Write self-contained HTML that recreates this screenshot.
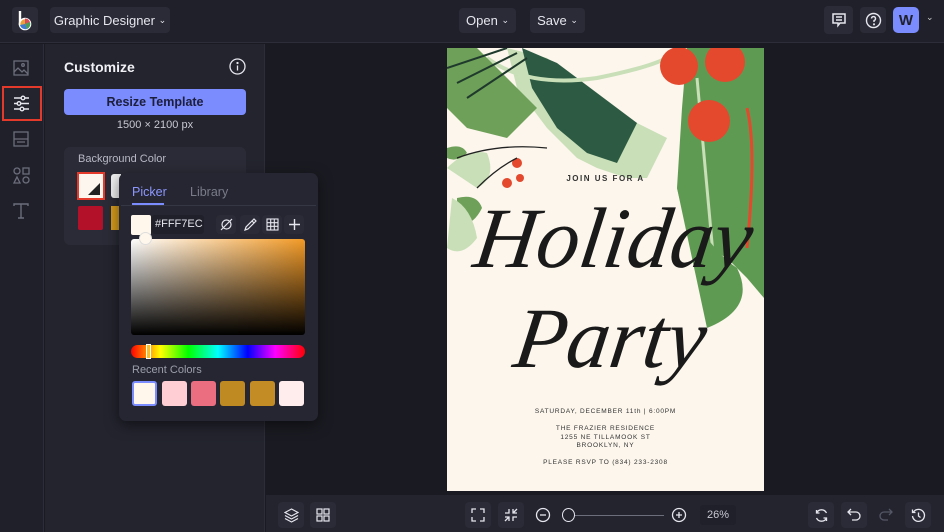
<!DOCTYPE html>
<html><head><meta charset="utf-8"><style>
*{box-sizing:border-box;margin:0;padding:0}
body{width:944px;height:532px;overflow:hidden;background:#1a1b22;font-family:"Liberation Sans",sans-serif;color:#e6e6ee;position:relative}
.abs{position:absolute}
.btn{position:absolute;background:#2a2b36;border-radius:4px;color:#e6e6ee;font-size:13px;display:flex;align-items:center;justify-content:center}
.ib{position:absolute;background:#2a2b36;border-radius:4px;display:flex;align-items:center;justify-content:center}
svg{display:block}
</style></head><body>
<div class="abs" style="left:0;top:0;width:944px;height:43px;background:#1f2029;border-bottom:1px solid #2c2d38"></div>
<div class="ib" style="left:12px;top:7px;width:26px;height:26px;background:#2a2b36">
<svg width="20" height="22" viewBox="0 0 20 22"><path d="M5 2v14" stroke="#fff" stroke-width="2.4"/><circle cx="10" cy="15" r="5.5" fill="#e8a23a"/><circle cx="10" cy="15" r="5.5" fill="none" stroke="#fff" stroke-width="1.6"/><path d="M10 15L10 9.5A5.5 5.5 0 0 1 15 13z" fill="#d94a5b"/><path d="M10 15L15 13A5.5 5.5 0 0 1 12 20z" fill="#4a9c5a"/><path d="M10 15L12 20A5.5 5.5 0 0 1 5 16z" fill="#3f7ad1"/></svg></div>
<div class="btn" style="left:50px;top:7px;width:120px;height:26px">Graphic Designer&nbsp;<span style="font-size:9px">&#8964;</span></div>
<div class="btn" style="left:459px;top:8px;width:57px;height:25px">Open&nbsp;<span style="font-size:9px">&#8964;</span></div>
<div class="btn" style="left:530px;top:8px;width:55px;height:25px">Save&nbsp;<span style="font-size:9px">&#8964;</span></div>
<div class="ib" style="left:824px;top:6px;width:29px;height:28px"><svg width="16" height="16" viewBox="0 0 16 16" fill="none" stroke="#e6e6ee" stroke-width="1.5"><path d="M2 2h12v9H9l-2 2.5V11H2z"/><path d="M5 5h6M5 8h6"/></svg></div>
<div class="ib" style="left:860px;top:7px;width:26px;height:26px"><svg width="17" height="17" viewBox="0 0 17 17" fill="none" stroke="#e6e6ee" stroke-width="1.4"><circle cx="8.5" cy="8.5" r="7"/><path d="M6.5 6.5a2 2 0 1 1 2.5 2v1.5"/><circle cx="9" cy="12.3" r=".4" fill="#e6e6ee"/></svg></div>
<div class="abs" style="left:893px;top:7px;width:26px;height:26px;background:#7b8cff;border-radius:5px;color:#1f2029;font-weight:bold;font-size:15px;display:flex;align-items:center;justify-content:center">W</div>
<div class="abs" style="left:926px;top:12px;font-size:9px;color:#ccc">&#8964;</div>

<div class="abs" style="left:0;top:44px;width:44px;height:488px;background:#1f2029;border-right:1px solid #2c2d38"></div>
<svg class="abs" style="left:13px;top:60px" width="16" height="16" viewBox="0 0 16 16" fill="none" stroke="#6c6e7c" stroke-width="1.3"><rect x="1" y="1" width="14" height="14"/><path d="M1 12l4-4 4 4 2-2 4 4"/><circle cx="10" cy="5" r="1.3"/></svg>
<div class="abs" style="left:2px;top:86px;width:40px;height:35px;border:2px solid #e43a2b;background:#23242e"></div>
<svg class="abs" style="left:13px;top:95px" width="17" height="17" viewBox="0 0 17 17" fill="none" stroke="#e6e6ee" stroke-width="1.4"><path d="M1 3h15M1 8.5h15M1 14h15"/><circle cx="10" cy="3" r="1.8" fill="#23242e"/><circle cx="6" cy="8.5" r="1.8" fill="#23242e"/><circle cx="9" cy="14" r="1.8" fill="#23242e"/></svg>
<svg class="abs" style="left:13px;top:131px" width="16" height="16" viewBox="0 0 16 16" fill="none" stroke="#6c6e7c" stroke-width="1.3"><rect x="1" y="1" width="14" height="14"/><path d="M1 8h14M4 11h8"/></svg>
<svg class="abs" style="left:13px;top:167px" width="17" height="17" viewBox="0 0 17 17" fill="none" stroke="#6c6e7c" stroke-width="1.3"><circle cx="4" cy="4" r="3"/><rect x="10" y="1" width="6" height="6"/><path d="M4 10l3 6H1z"/><circle cx="13" cy="13" r="3"/></svg>
<svg class="abs" style="left:13px;top:203px" width="16" height="16" viewBox="0 0 16 16" fill="none" stroke="#6c6e7c" stroke-width="1.4"><path d="M1 3V1h14v2M8 1v14M5 15h6"/></svg>

<div class="abs" style="left:45px;top:44px;width:220px;height:488px;background:#23242e;border-right:1px solid #2c2d38"></div>
<div class="abs" style="left:64px;top:59px;font-size:14px;font-weight:bold;color:#f0f0f5">Customize</div>
<svg class="abs" style="left:229px;top:58px" width="17" height="17" viewBox="0 0 17 17" fill="none" stroke="#e6e6ee" stroke-width="1.3"><circle cx="8.5" cy="8.5" r="7.5"/><path d="M8.5 7.5v5"/><circle cx="8.5" cy="5" r=".5" fill="#fff"/></svg>
<div class="abs" style="left:64px;top:89px;width:182px;height:26px;background:#7b8cff;border-radius:4px;color:#1c1e3a;font-size:12.5px;font-weight:bold;display:flex;align-items:center;justify-content:center">Resize Template</div>
<div class="abs" style="left:64px;top:119px;width:182px;text-align:center;font-size:11px;color:#c8c8d2">1500 × 2100 px</div>
<div class="abs" style="left:64px;top:147px;width:182px;height:98px;background:#2a2b36;border-radius:6px"></div>
<div class="abs" style="left:78px;top:153px;font-size:11px;color:#b8b9c6">Background Color</div>
<div class="abs" style="left:77px;top:172px;width:28px;height:28px;border:2px solid #e43a2b;background:#fdf6ee;padding:2px"><div style="position:absolute;right:3px;bottom:3px;width:0;height:0;border-left:12px solid transparent;border-bottom:12px solid #222"></div></div>
<div class="abs" style="left:111px;top:174px;width:10px;height:24px;background:#f0f0f0;border-radius:3px 0 0 3px"></div>
<div class="abs" style="left:78px;top:206px;width:25px;height:24px;background:#b3112a;border-radius:2px"></div>
<div class="abs" style="left:111px;top:206px;width:10px;height:24px;background:#d59a1c"></div>

<div class="abs" style="left:119px;top:173px;width:199px;height:248px;background:#252631;border-radius:7px;box-shadow:0 4px 14px rgba(0,0,0,.5)"></div>
<div class="abs" style="left:132px;top:185px;font-size:12.5px;color:#8c97ff">Picker</div>
<div class="abs" style="left:132px;top:203px;width:32px;height:2px;background:#7b8cff"></div>
<div class="abs" style="left:190px;top:185px;font-size:12.5px;color:#7a7c8a">Library</div>
<div class="abs" style="left:121px;top:205px;width:195px;height:1px;background:#363745"></div>
<div class="abs" style="left:131px;top:215px;width:20px;height:20px;background:#fff7ec;border-radius:2px"></div>
<div class="abs" style="left:152px;top:215px;width:52px;height:19px;background:#1f2029;border-radius:3px;font-size:11px;color:#e6e6ee;padding:3px 0 0 3px">#FFF7EC</div>
<div class="ib" style="left:216px;top:215px;width:20px;height:19px"><svg width="13" height="13" viewBox="0 0 13 13" fill="none" stroke="#e6e6ee" stroke-width="1.2"><circle cx="6.5" cy="6.5" r="4.5"/><path d="M1 12L12 1"/></svg></div>
<div class="ib" style="left:240px;top:215px;width:20px;height:19px"><svg width="13" height="13" viewBox="0 0 13 13" fill="none" stroke="#e6e6ee" stroke-width="1.2"><path d="M1 12l1-3 6-6 2 2-6 6zM8 3l2-2 2 2-2 2"/></svg></div>
<div class="ib" style="left:262px;top:215px;width:20px;height:19px"><svg width="13" height="13" viewBox="0 0 13 13" fill="none" stroke="#e6e6ee" stroke-width="1.1"><rect x="1" y="1" width="11" height="11"/><path d="M4.7 1v11M8.3 1v11M1 4.7h11M1 8.3h11"/></svg></div>
<div class="ib" style="left:284px;top:215px;width:20px;height:19px"><svg width="13" height="13" viewBox="0 0 13 13" stroke="#e6e6ee" stroke-width="1.4"><path d="M6.5 1v11M1 6.5h11"/></svg></div>
<div class="abs" style="left:131px;top:239px;width:174px;height:96px;border-radius:3px;background:linear-gradient(to bottom,rgba(0,0,0,0),#000),linear-gradient(to right,#fff,#f29a26)"></div>
<div class="abs" style="left:139px;top:232px;width:13px;height:13px;border-radius:50%;background:#fff7ec;border:1px solid #ddd"></div>
<div class="abs" style="left:131px;top:345px;width:174px;height:13px;border-radius:7px;background:linear-gradient(to right,#f00,#ff0 17%,#0f0 33%,#0ff 50%,#00f 67%,#f0f 83%,#f00)"></div>
<div class="abs" style="left:146px;top:344px;width:5px;height:15px;border:1px solid #fff;background:#f9c02a"></div>
<div class="abs" style="left:132px;top:364px;font-size:11px;color:#9c9eab">Recent Colors</div>
<div class="abs" style="left:132px;top:381px;width:25px;height:25px;background:#fff7ec;border:2px solid #7b8cff;border-radius:3px"></div>
<div class="abs" style="left:162px;top:381px;width:25px;height:25px;background:#ffcdd4;border-radius:3px"></div>
<div class="abs" style="left:191px;top:381px;width:25px;height:25px;background:#ea6d80;border-radius:3px"></div>
<div class="abs" style="left:220px;top:381px;width:25px;height:25px;background:#c08a22;border-radius:3px"></div>
<div class="abs" style="left:250px;top:381px;width:25px;height:25px;background:#c38c25;border-radius:3px"></div>
<div class="abs" style="left:279px;top:381px;width:25px;height:25px;background:#ffeced;border-radius:3px"></div>

<div class="abs" style="left:447px;top:48px;width:317px;height:443px;background:#fcf6ec;overflow:hidden">
<svg width="317" height="443" viewBox="0 0 317 443">
<path d="M60 0L100 10 140 40 180 70 220 90 200 130 180 130 150 120 130 110 100 80 70 40z" fill="#c8dfb7"/>
<path d="M75 0L110 15 150 45 190 75 170 115 140 105 110 80 85 40z" fill="#2d5a43"/>
<path d="M40 10Q80 40 150 30 200 20 220 10" stroke="#c8dfb7" stroke-width="4" fill="none"/>
<path d="M0 0h30L60 30 90 60 60 90 20 80 0 60z" fill="#6ea059"/>
<path d="M0 120Q20 100 40 105 50 130 30 140 0 150z" fill="#c8dfb7"/>
<path d="M0 100q15-5 20 5-10 10-20 5z" fill="#6ea059"/>
<path d="M10 150q20-5 25 10-10 20-25 15z" fill="#6ea059"/>
<path d="M5 150q20 10 25 40-15 20-30 10z" fill="#c8dfb7"/>
<path d="M240 0h77v250L300 230 280 210 260 200 240 180 230 140 235 60z" fill="#5f9a53"/>
<path d="M250 30L270 250" stroke="#c8dfb7" stroke-width="3" fill="none"/>
<path d="M300 60q10 40 0 140" stroke="#e4492d" stroke-width="3" fill="none"/>
<path d="M230 140q30 60 60 80 20 40 -30 60" fill="#5f9a53"/>
<circle cx="232" cy="18" r="19" fill="#e4492d"/><circle cx="278" cy="14" r="20" fill="#e4492d"/><circle cx="262" cy="73" r="21" fill="#e4492d"/>
<circle cx="70" cy="115" r="5" fill="#e4492d"/><circle cx="60" cy="135" r="5" fill="#e4492d"/><circle cx="73" cy="130" r="4" fill="#e4492d"/>
<path d="M0 20L60 0M10 35L70 5M20 50L80 10" stroke="#1f3a2c" stroke-width="2"/>
<path d="M10 110q40-15 90-10M30 140q20-20 40-30" stroke="#222" stroke-width="1.3" fill="none"/>
</svg>
<div class="abs" style="left:0;top:126px;width:317px;text-align:center;font-size:8px;letter-spacing:1.5px;font-weight:bold;color:#333">JOIN US FOR A</div>
<div class="abs" style="left:15px;top:140px;width:290px;text-align:center;font-family:'Liberation Serif',serif;font-style:italic;font-size:86px;line-height:100px;color:#1a1a1a;transform:skewX(-8deg)">Holiday<br>&nbsp;Party</div>
<div class="abs" style="left:0;top:360px;width:317px;text-align:center;font-size:6.5px;letter-spacing:.8px;color:#333">SATURDAY, DECEMBER 11th | 6:00PM</div>
<div class="abs" style="left:0;top:377px;width:317px;text-align:center;font-size:6.5px;letter-spacing:.8px;line-height:8.6px;color:#333">THE FRAZIER RESIDENCE<br>1255 NE TILLAMOOK ST<br>BROOKLYN, NY</div>
<div class="abs" style="left:0;top:411px;width:317px;text-align:center;font-size:6.5px;letter-spacing:.8px;color:#333">PLEASE RSVP TO (834) 233-2308</div>
</div>

<div class="abs" style="left:266px;top:495px;width:678px;height:37px;background:#23242e"></div>
<div class="ib" style="left:278px;top:502px;width:26px;height:26px"><svg width="15" height="15" viewBox="0 0 15 15" fill="none" stroke="#e6e6ee" stroke-width="1.2"><path d="M7.5 1L14 4.5 7.5 8 1 4.5zM1 7.5l6.5 3.5L14 7.5M1 10.5l6.5 3.5 6.5-3.5"/></svg></div>
<div class="ib" style="left:310px;top:502px;width:26px;height:26px"><svg width="14" height="14" viewBox="0 0 14 14" fill="none" stroke="#e6e6ee" stroke-width="1.2"><rect x="1" y="1" width="5" height="5"/><rect x="8" y="1" width="5" height="5"/><rect x="1" y="8" width="5" height="5"/><rect x="8" y="8" width="5" height="5"/></svg></div>
<div class="ib" style="left:465px;top:502px;width:26px;height:26px"><svg width="14" height="14" viewBox="0 0 14 14" fill="none" stroke="#e6e6ee" stroke-width="1.3"><path d="M1 5V1h4M9 1h4v4M13 9v4H9M5 13H1V9"/></svg></div>
<div class="ib" style="left:498px;top:502px;width:26px;height:26px"><svg width="14" height="14" viewBox="0 0 14 14" fill="none" stroke="#e6e6ee" stroke-width="1.3"><path d="M1 5h4V1M9 1v4h4M13 9H9v4M5 13V9H1M9 5l4-4M5 9l-4 4"/></svg></div>
<svg class="abs" style="left:535px;top:507px" width="16" height="16" viewBox="0 0 16 16" fill="none" stroke="#e6e6ee" stroke-width="1.3"><circle cx="8" cy="8" r="6.5"/><path d="M5 8h6"/></svg>
<div class="abs" style="left:562px;top:515px;width:102px;height:1px;background:#6c6e7c"></div>
<div class="abs" style="left:562px;top:508px;width:13px;height:14px;border-radius:50%;border:1.5px solid #e6e6ee;background:#23242e"></div>
<svg class="abs" style="left:671px;top:507px" width="16" height="16" viewBox="0 0 16 16" fill="none" stroke="#e6e6ee" stroke-width="1.3"><circle cx="8" cy="8" r="6.5"/><path d="M5 8h6M8 5v6"/></svg>
<div class="abs" style="left:700px;top:505px;width:36px;height:20px;background:#1f2029;border-radius:3px;font-size:11px;color:#c8c8d2;text-align:center;line-height:20px">26%</div>
<div class="ib" style="left:808px;top:502px;width:26px;height:26px"><svg width="15" height="15" viewBox="0 0 15 15" fill="none" stroke="#e6e6ee" stroke-width="1.3"><path d="M12.5 5A5.5 5.5 0 0 0 2.5 5M2.5 10a5.5 5.5 0 0 0 10 0M2.5 2v3h3M12.5 13v-3h-3"/></svg></div>
<div class="ib" style="left:841px;top:502px;width:26px;height:26px"><svg width="15" height="14" viewBox="0 0 15 14" fill="none" stroke="#e6e6ee" stroke-width="1.3"><path d="M4 1L1 4l3 3M1 4h8a4 4 0 0 1 0 8H5"/></svg></div>
<svg class="abs" style="left:878px;top:508px" width="15" height="14" viewBox="0 0 15 14" fill="none" stroke="#555766" stroke-width="1.3"><path d="M11 1l3 3-3 3M14 4H6a4 4 0 0 0 0 8h4"/></svg>
<div class="ib" style="left:905px;top:502px;width:26px;height:26px"><svg width="15" height="15" viewBox="0 0 15 15" fill="none" stroke="#e6e6ee" stroke-width="1.3"><path d="M2.5 4A6 6 0 1 1 1.5 8M1.5 1.5v3h3M7.5 4.5v3.5l2 1.5"/></svg></div>
</body></html>
